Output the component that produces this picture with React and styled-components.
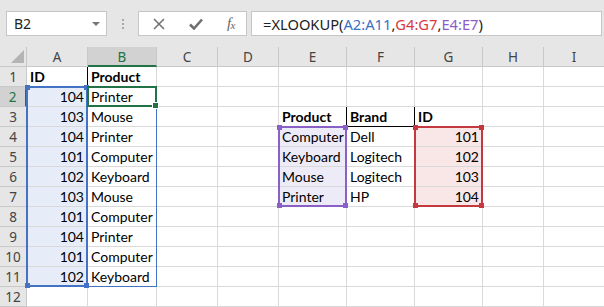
import React from "react";
import styled, { createGlobalStyle } from "styled-components";

const GlobalStyle = createGlobalStyle`
  html, body {
    margin: 0;
    padding: 0;
    background: #ffffff;
  }
  body {
    width: 604px;
    height: 307px;
    overflow: hidden;
    font-family: Lato, "Liberation Sans", sans-serif;
  }
`;

const ROW_HEAD = 27;
const ROW_H = 20;
const COLS = [
  { key: "A", w: 61 },
  { key: "B", w: 69 },
  { key: "C", w: 61 },
  { key: "D", w: 61 },
  { key: "E", w: 68 },
  { key: "F", w: 68 },
  { key: "G", w: 68 },
  { key: "H", w: 61 },
  { key: "I", w: 61 },
];

const colX = {};
let acc = ROW_HEAD;
COLS.forEach((c) => {
  colX[c.key] = acc;
  acc += c.w;
});
const colW = Object.fromEntries(COLS.map((c) => [c.key, c.w]));
const rowY = (r) => r * ROW_H;

const BLUE = "#4472c4";
const PURPLE = "#8a5fc6";
const RED = "#c4393f";
const GREEN = "#217346";

// cell contents
const cells = {
  A1: { v: "ID", bold: true, rb: true },
  B1: { v: "Product", bold: true },
  E3: { v: "Product", bold: true, rb: true, bb: true },
  F3: { v: "Brand", bold: true, rb: true, bb: true },
  G3: { v: "ID", bold: true, bb: true },
};
[104, 103, 104, 101, 102, 103, 101, 104, 101, 102].forEach((n, i) => {
  cells["A" + (i + 2)] = { v: n, num: true, fill: "#e7edf8" };
});
["Printer", "Mouse", "Printer", "Computer", "Keyboard", "Mouse", "Computer", "Printer", "Computer", "Keyboard"].forEach(
  (p, i) => {
    cells["B" + (i + 2)] = { v: p };
  }
);
[
  ["Computer", "Dell", 101],
  ["Keyboard", "Logitech", 102],
  ["Mouse", "Logitech", 103],
  ["Printer", "HP", 104],
].forEach(([p, b, id], i) => {
  cells["E" + (i + 4)] = { v: p, fill: "#eeebf8" };
  cells["F" + (i + 4)] = { v: b };
  cells["G" + (i + 4)] = { v: id, num: true, fill: "#f9e6e6" };
});

/* ---------- formula bar ---------- */

const Toolbar = styled.div`
  height: 47px;
  background: #e6e6e6;
  display: flex;
  align-items: flex-start;
  padding: 11px 2px 0 6px;
  box-sizing: border-box;
`;

const Field = styled.div`
  height: 25px;
  box-sizing: border-box;
  background: #ffffff;
  border: 1px solid #c6c6c6;
  display: flex;
  align-items: center;
  font-family: "Noto Sans", "Open Sans", sans-serif;
  font-size: 14px;
  color: #222;
`;

const NameBox = styled(Field)`
  width: 101px;
  padding: 0 6px 0 7px;
  justify-content: space-between;
`;

const Caret = styled.span`
  width: 0;
  height: 0;
  border-left: 4px solid transparent;
  border-right: 4px solid transparent;
  border-top: 4px solid #777;
  margin-top: 1px;
`;

const Grip = styled.div`
  width: 31px;
  height: 25px;
  display: flex;
  flex-direction: column;
  align-items: center;
  justify-content: center;
  gap: 2px;
  span {
    width: 2px;
    height: 2px;
    background: #a8a8a8;
  }
`;

const FxButtons = styled(Field)`
  width: 109px;
  justify-content: space-between;
  padding: 0 11px 0 14px;
  color: #707070;
`;

const FxLabel = styled.span`
  font-family: "Liberation Serif", "DejaVu Serif", serif;
  font-style: italic;
  font-size: 15px;
  color: #666;
  letter-spacing: -0.5px;
  sub {
    font-size: 11px;
    vertical-align: -1px;
  }
`;

const FormulaInput = styled(Field)`
  flex: 1;
  margin-left: 4px;
  padding-left: 11px;
  white-space: pre;
  font-size: 14.7px;
`;

const Ref = styled.span`
  color: ${(p) => p.$c};
`;

/* ---------- grid ---------- */

const Sheet = styled.div`
  position: relative;
  display: grid;
  grid-template-columns: ${ROW_HEAD}px ${COLS.map((c) => c.w + "px").join(" ")};
  grid-auto-rows: ${ROW_H}px;
`;

const HeadCell = styled.div`
  box-sizing: border-box;
  background: ${(p) => (p.$sel ? "#d2d2d2" : "#e6e6e6")};
  color: ${(p) => (p.$sel ? GREEN : "#444")};
  font-family: "Noto Sans", "Open Sans", sans-serif;
  font-size: 13.5px;
  display: flex;
  align-items: center;
  justify-content: center;
`;

const ColHead = styled(HeadCell)`
  border-right: 1px solid #c8c8c8;
  border-bottom: ${(p) => (p.$sel ? `2px solid ${GREEN}` : "1px solid #c8c8c8")};
  padding-top: ${(p) => (p.$sel ? "1px" : "0")};
`;

const RowHead = styled(HeadCell)`
  border-bottom: 1px solid #c8c8c8;
  border-right: ${(p) => (p.$sel ? `2px solid ${GREEN}` : "1px solid #c8c8c8")};
`;

const Corner = styled(HeadCell)`
  border-right: 1px solid #c8c8c8;
  border-bottom: 1px solid #c8c8c8;
  align-items: flex-end;
  justify-content: flex-end;
  padding: 0 2px 3px 0;
`;

const Cell = styled.div`
  box-sizing: border-box;
  background: ${(p) => p.$fill || "#ffffff"};
  border-right: 1px solid ${(p) => (p.$rb ? "#000" : "#d9d9d9")};
  border-bottom: 1px solid ${(p) => (p.$bb ? "#000" : "#d9d9d9")};
  font-size: 14px;
  font-weight: ${(p) => (p.$bold ? 700 : 400)};
  color: #000;
  display: flex;
  align-items: flex-end;
  justify-content: ${(p) => (p.$num ? "flex-end" : "flex-start")};
  padding: 0 3px 1px 3px;
  white-space: nowrap;
  overflow: visible;
`;

/* ---------- overlays ---------- */

const RangeBox = styled.div`
  position: absolute;
  box-sizing: border-box;
  border: ${(p) => p.$t}px solid ${(p) => p.$c};
  pointer-events: none;
`;

const Handle = styled.span`
  position: absolute;
  width: 5px;
  height: 5px;
  background: ${(p) => p.$c};
  ${(p) => (p.$top ? "top" : "bottom")}: -${(p) => p.$off}px;
  ${(p) => (p.$left ? "left" : "right")}: -${(p) => p.$off}px;
`;

const FillHandle = styled.span`
  position: absolute;
  width: 5px;
  height: 5px;
  right: -4px;
  bottom: -4px;
  background: ${GREEN};
  border: 1px solid #fff;
`;

function Range({ x, y, w, h, color, t = 2, handles = true, children }) {
  const off = Math.ceil((5 + t) / 2) - 1;
  return (
    <RangeBox $c={color} $t={t} style={{ left: x, top: y, width: w, height: h }}>
      {handles &&
        [
          [true, true],
          [true, false],
          [false, true],
          [false, false],
        ].map(([top, left], i) => <Handle key={i} $c={color} $top={top} $left={left} $off={off} />)}
      {children}
    </RangeBox>
  );
}

function span(c1, r1, c2, r2) {
  const x = colX[c1];
  const y = rowY(r1);
  const w = colX[c2] + colW[c2] - x;
  const h = rowY(r2) + ROW_H - y;
  return { x, y, w, h };
}

function Grid() {
  const rows = [];
  for (let r = 1; r <= 12; r++) {
    rows.push(
      <RowHead key={"r" + r} $sel={r === 2}>
        {r}
      </RowHead>
    );
    COLS.forEach((c) => {
      const d = cells[c.key + r] || {};
      rows.push(
        <Cell key={c.key + r} $fill={d.fill} $bold={d.bold} $num={d.num} $rb={d.rb} $bb={d.bb}>
          {d.v}
        </Cell>
      );
    });
  }

  const a = span("A", 2, "A", 11);
  const b = span("B", 2, "B", 11);
  const act = span("B", 2, "B", 2);
  const e = span("E", 4, "E", 7);
  const g = span("G", 4, "G", 7);

  return (
    <Sheet>
      <Corner>
        <svg width="13" height="13" viewBox="0 0 13 13">
          <polygon points="13,0 13,13 0,13" fill="#b4b4b4" />
        </svg>
      </Corner>
      {COLS.map((c) => (
        <ColHead key={c.key} $sel={c.key === "B"}>
          {c.key}
        </ColHead>
      ))}
      {rows}

      <Range x={b.x - 1} y={b.y} w={b.w + 1} h={b.h} color={BLUE} t={1} handles={false} />
      <Range x={a.x - 1} y={a.y - 1} w={a.w + 1} h={a.h + 1} color={BLUE} t={2} />
      <Range x={e.x - 1} y={e.y - 1} w={e.w + 1} h={e.h + 1} color={PURPLE} t={2} />
      <Range x={g.x - 1} y={g.y - 1} w={g.w + 1} h={g.h + 1} color={RED} t={2} />
      <Range x={act.x - 1} y={act.y - 1} w={act.w + 1} h={act.h + 1} color={GREEN} t={2} handles={false}>
        <FillHandle />
      </Range>
    </Sheet>
  );
}

export default function App() {
  return (
    <>
      <GlobalStyle />
      <Toolbar>
        <NameBox>
          B2
          <Caret />
        </NameBox>
        <Grip>
          <span />
          <span />
          <span />
        </Grip>
        <FxButtons>
          <svg width="12" height="12" viewBox="0 0 12 12">
            <path d="M1 1 L11 11 M11 1 L1 11" stroke="#6f6f6f" strokeWidth="1.5" fill="none" />
          </svg>
          <svg width="14" height="12" viewBox="0 0 14 12">
            <path d="M1 6.5 L5 10.5 L13 1.5" stroke="#6f6f6f" strokeWidth="2.6" fill="none" />
          </svg>
          <FxLabel>
            f<sub>x</sub>
          </FxLabel>
        </FxButtons>
        <FormulaInput>
          =XLOOKUP(<Ref $c="#3b6fc9">A2:A11</Ref>,<Ref $c="#d8383f">G4:G7</Ref>,
          <Ref $c="#8e5bc9">E4:E7</Ref>)
        </FormulaInput>
      </Toolbar>
      <Grid />
    </>
  );
}
